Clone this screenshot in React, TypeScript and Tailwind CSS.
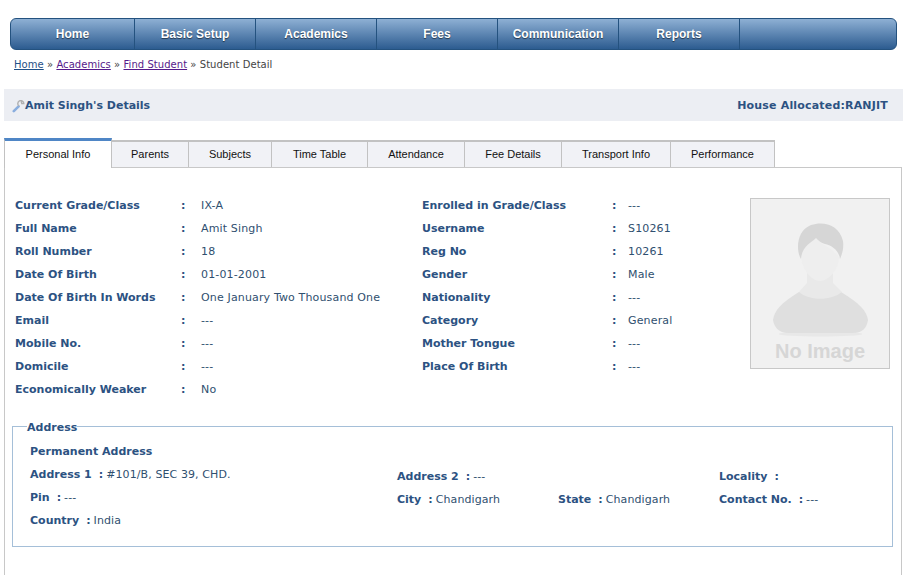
const NAV = ['Home', 'Basic Setup', 'Academics', 'Fees', 'Communication', 'Reports', ''];

const TABS = [
  { label: 'Personal Info', width: 'w-[108px]' },
  { label: 'Parents', width: 'w-[77px]' },
  { label: 'Subjects', width: 'w-[83px]' },
  { label: 'Time Table', width: 'w-[96px]' },
  { label: 'Attendance', width: 'w-[97px]' },
  { label: 'Fee Details', width: 'w-[97px]' },
  { label: 'Transport Info', width: 'w-[109px]' },
  { label: 'Performance', width: 'w-[104px]' },
];

const LEFT_ROWS = [
  ['Current Grade/Class', 'IX-A'],
  ['Full Name', 'Amit Singh'],
  ['Roll Number', '18'],
  ['Date Of Birth', '01-01-2001'],
  ['Date Of Birth In Words', 'One January Two Thousand One'],
  ['Email', '---'],
  ['Mobile No.', '---'],
  ['Domicile', '---'],
  ['Economically Weaker', 'No'],
];

const RIGHT_ROWS = [
  ['Enrolled in Grade/Class', '---'],
  ['Username', 'S10261'],
  ['Reg No', '10261'],
  ['Gender', 'Male'],
  ['Nationality', '---'],
  ['Category', 'General'],
  ['Mother Tongue', '---'],
  ['Place Of Birth', '---'],
];

function KeyIcon() {
  return (
    <svg width="13" height="13" viewBox="0 0 13 13" className="shrink-0">
      <path d="M1.8 11.2 L6.6 6.4" stroke="#8aaede" strokeWidth="2.6" strokeLinecap="round" />
      <path d="M7 6 A3 3 0 1 1 11.8 3.6 L9.8 3.6 L9.2 1.4" fill="none" stroke="#b0b0b0" strokeWidth="1.4" />
    </svg>
  );
}

function Avatar() {
  return (
    <svg width="95" height="114" viewBox="0 0 95 114">
      <ellipse cx="47.5" cy="111" rx="42" ry="2.5" fill="#e8e8e8" />
      <path d="M0 97 C1 88 8 80 26 69 L68 69 C86 80 94 88 95 97 C94 104 90 110 80 110 L15 110 C6 110 1 104 0 97 Z" fill="#dfdfdf" />
      <path d="M34 46 L60 46 L60 60 L69 69 C58 78 36 78 26 69 L34 60 Z" fill="#e9e9e9" />
      <path d="M28 34 C30 24 36 20 43 15 C48 22 58 24 66 34 C66 46 56 58 47 58 C38 58 29 46 28 34 Z" fill="#eeeeee" />
      <path d="M28 36 C23 28 23 8 38 2 C50 -2 66 1 70 18 C71 26 69 31 67 36 C66 27 58 22 52 21 C48 20 45 17 43 15 C38 20 29 23 28 36 Z" fill="#d6d6d6" />
    </svg>
  );
}

function DetailRows({ rows, colon, value }: { rows: string[][]; colon: string; value: string }) {
  return (
    <div className="flex flex-col gap-[9px]">
      {rows.map(([label, val]) => (
        <div key={label} className="flex h-[14px] items-center leading-[14px]">
          <span className={`${colon} shrink-0 font-bold text-[#2c5282]`}>{label}</span>
          <span className={`${value} shrink-0 font-bold text-[#2c5282]`}>:</span>
          <span className="whitespace-nowrap tracking-[0.15px]">{val}</span>
        </div>
      ))}
    </div>
  );
}

function AddressItem({ label, value, width }: { label: string; value?: string; width?: string }) {
  return (
    <div className={`flex h-[14px] items-center whitespace-nowrap leading-[14px] ${width ?? ''}`}>
      <b className="font-bold text-[#2c5282]">{label}</b>
      <b className="ml-[7px] mr-[3px] font-bold text-[#2c5282]">:</b>
      {value && <span className="tracking-[0.1px]">{value}</span>}
    </div>
  );
}

export default function App() {
  return (
    <div className="h-[575px] w-[907px] overflow-hidden bg-white font-['DejaVu_Sans','Liberation_Sans',sans-serif] text-[11px] text-[#2f4f6f]">
      {/* Top menu */}
      <div className="pl-[10px] pr-[10px] pt-[18px]">
        <div className="flex h-[32px] rounded-[6px] border border-[#24527f] bg-gradient-to-b from-[#8eb0d4] to-[#2c5c90] font-['Liberation_Sans',sans-serif] text-[12px] font-bold text-white [text-shadow:0_1px_1px_rgba(0,0,0,0.55)]">
          {NAV.map((item, i) => (
            <div
              key={i}
              className={`flex items-center justify-center border-r border-[#24527f] ${i === 0 ? 'w-[124px]' : 'w-[121px]'} ${i === 6 ? 'border-r-0 flex-1' : ''}`}
            >
              {item}
            </div>
          ))}
        </div>
      </div>

      {/* Breadcrumb */}
      <div className="mt-[8px] pl-[14px] text-[10px] leading-[14px] tracking-[0.05px] text-[#444]">
        <a className="text-[#1f4f86] underline">Home</a> » <a className="text-[#551a8b] underline">Academics</a> »{' '}
        <a className="text-[#551a8b] underline">Find Student</a> » Student Detail
      </div>

      {/* Title bar */}
      <div className="ml-[4px] mr-[4px] mt-[17px] flex h-[32px] items-center justify-between bg-[#eceef3] pl-[8px] pr-[15px] pt-[2px] font-bold text-[#2c5282]">
        <div className="flex items-center">
          <KeyIcon />
          <span>Amit Singh's Details</span>
        </div>
        <span className="tracking-[0.18px]">House Allocated:RANJIT</span>
      </div>

      {/* Tabs */}
      <div className="ml-[4px] mt-[17px] flex h-[29px] items-end font-['Liberation_Sans',sans-serif] text-[#111]">
        {TABS.map((tab, i) =>
          i === 0 ? (
            <div
              key={tab.label}
              className={`${tab.width} relative z-10 -mb-px flex h-[30px] items-center justify-center border-l border-r border-t-[3px] border-[#c2c2c2] border-t-[#4f86c6] bg-white`}
            >
              {tab.label}
            </div>
          ) : (
            <div
              key={tab.label}
              className={`${tab.width} flex h-[27px] items-center justify-center border-r border-t-2 border-[#c2c2c2] bg-[#f1f2f6]`}
            >
              {tab.label}
            </div>
          ),
        )}
      </div>

      {/* Tab content */}
      <div className="ml-[4px] mr-[5px] h-[420px] border border-b-0 border-[#c8c8c8] pl-[7px] pr-[8px]">
        <div className="flex pl-[3px] pt-[31px]">
          <div className="w-[407px] shrink-0">
            <DetailRows rows={LEFT_ROWS} colon="w-[166px]" value="w-[20px]" />
          </div>
          <div className="w-[328px] shrink-0">
            <DetailRows rows={RIGHT_ROWS} colon="w-[190px]" value="w-[16px]" />
          </div>
          <div className="-mt-[1px] flex h-[171px] w-[140px] shrink-0 flex-col items-center border border-[#c8c8c8] bg-[#f1f1f1] pt-[24px]">
            <Avatar />
            <span className="mt-[3px] font-['Liberation_Sans',sans-serif] text-[20px] font-bold leading-[22px] text-[#d6d6d6]">
              No Image
            </span>
          </div>
        </div>

        {/* Address */}
        <fieldset className="mt-[20px] h-[130px] w-[881px] border border-[#a5bfd8] pl-[14px]">
          <legend className="pt-[4px] font-bold leading-[14px] text-[#2c5282]">Address</legend>
          <div className="mt-[10px] flex">
            <div className="flex w-[370px] shrink-0 flex-col gap-[9px] pl-[3px]">
              <b className="h-[14px] font-bold leading-[14px] text-[#2c5282]">Permanent Address</b>
              <AddressItem label="Address 1" value="#101/B, SEC 39, CHD." />
              <AddressItem label="Pin" value="---" />
              <AddressItem label="Country" value="India" />
            </div>
            <div className="flex flex-col gap-[9px] pt-[25px]">
              <div className="flex">
                <AddressItem label="Address 2" value="---" width="w-[322px]" />
                <AddressItem label="Locality" />
              </div>
              <div className="flex">
                <AddressItem label="City" value="Chandigarh" width="w-[161px]" />
                <AddressItem label="State" value="Chandigarh" width="w-[161px]" />
                <AddressItem label="Contact No." value="---" />
              </div>
            </div>
          </div>
        </fieldset>
      </div>
    </div>
  );
}
